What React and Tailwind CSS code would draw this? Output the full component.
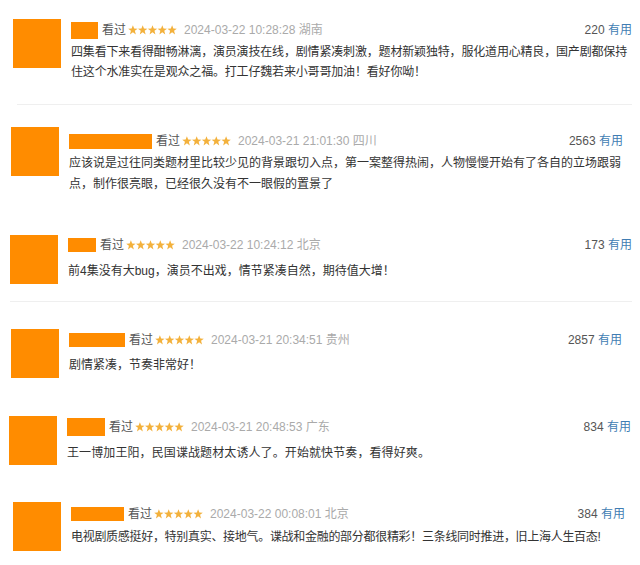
import React from "react";

const reviews = [
  {
    row: "h-[110px] pt-[19px] pl-[13px] pr-[8px]",
    nameBox: "w-[27px] h-[17px]",
    headMt: "mt-[3px]",
    body: "mt-[4px] leading-[20px] tracking-[-0.17px]",
    lines: [
      "四集看下来看得酣畅淋漓，演员演技在线，剧情紧凑刺激，题材新颖独特，服化道用心精良，国产剧都保持",
      "住这个水准实在是观众之福。打工仔魏若来小哥哥加油！看好你呦！",
    ],
    date: "2024-03-22 10:28:28",
    place: "湖南",
    votes: 220,
    divider: "ml-[4px] mb-[5px]",
  },
  {
    row: "h-[105px] pt-[17px] pl-[11px] pr-[17px]",
    nameBox: "w-[83px] h-[15px]",
    headMt: "mt-[6px]",
    body: "mt-[4px] leading-[21px]",
    lines: [
      "应该说是过往同类题材里比较少见的背景跟切入点，第一案整得热闹，人物慢慢开始有了各自的立场跟弱",
      "点，制作很亮眼，已经很久没有不一眼假的置景了",
    ],
    date: "2024-03-21 21:01:30",
    place: "四川",
    votes: 2563,
  },
  {
    row: "h-[95px] pt-[20px] pl-[10px] pr-[8px]",
    nameBox: "w-[28px] h-[14px]",
    headMt: "mt-[2px]",
    body: "mt-[8px] leading-[20px]",
    lines: ["前4集没有大bug，演员不出戏，情节紧凑自然，期待值大增！"],
    date: "2024-03-22 10:24:12",
    place: "北京",
    votes: 173,
    divider: "ml-0 mb-[8px]",
  },
  {
    row: "h-[85px] pt-[19px] pl-[11px] pr-[18px]",
    nameBox: "w-[56px] h-[14px]",
    headMt: "mt-[3px]",
    body: "mt-[7px] leading-[20px]",
    lines: ["剧情紧凑，节奏非常好！"],
    date: "2024-03-21 20:34:51",
    place: "贵州",
    votes: 2857,
  },
  {
    row: "h-[90px] pt-[21px] pl-[9px] pr-[9px]",
    nameBox: "w-[38px] h-[18px]",
    headMt: "mt-[3px]",
    body: "mt-[8px] leading-[20px] tracking-[0.1px]",
    lines: ["王一博加王阳，民国谍战题材太诱人了。开始就快节奏，看得好爽。"],
    date: "2024-03-21 20:48:53",
    place: "广东",
    votes: 834,
  },
  {
    row: "h-[80px] pt-[17px] pl-[13px] pr-[15px]",
    nameBox: "w-[53px] h-[14px]",
    headMt: "mt-[4px]",
    body: "mt-[5px] leading-[20px] tracking-[-0.3px]",
    lines: ["电视剧质感挺好，特别真实、接地气。谍战和金融的部分都很精彩！三条线同时推进，旧上海人生百态!"],
    date: "2024-03-22 00:08:01",
    place: "北京",
    votes: 384,
  },
];

// five small gold stars, drawn as one strip
const Stars = () => (
  <svg width="49" height="10" viewBox="0 0 50 10" className="shrink-0">
    {[0, 1, 2, 3, 4].map((i) => (
      <polygon
        key={i}
        transform={`translate(${i * 10} 0)`}
        points="5,0.2 6.3,3.5 9.8,3.6 7,5.8 8,9.5 5,7.4 2,9.5 3,5.8 0.2,3.6 3.7,3.5"
        fill="#f3b13c"
      />
    ))}
  </svg>
);

const Review = ({ r }) => (
  <div className={`flex flex-col ${r.row}`}>
    <div className="flex items-start">
      <div className="w-[48px] h-[49px] bg-[#ff8c00] shrink-0" />
      <div className="flex-1 ml-[10px] min-w-0">
        <div className={`flex items-center h-[16px] text-[12px] ${r.headMt}`}>
          <div className={`bg-[#ff8c00] shrink-0 ${r.nameBox}`} />
          <span className="ml-[4px] text-[#555]">看过</span>
          <span className="ml-[2px] flex items-center">
            <Stars />
          </span>
          <span className="ml-[7px] text-[#aaa]">
            {r.date} {r.place}
          </span>
          <span className="ml-auto text-[#555]">
            {r.votes} <span className="text-[#3f7db3]">有用</span>
          </span>
        </div>
        <div className={`text-[12px] text-[#333] ${r.body}`}>
          {r.lines.map((l, i) => (
            <div key={i} className="whitespace-nowrap">
              {l}
            </div>
          ))}
        </div>
      </div>
    </div>
    {r.divider && <div className={`mt-auto h-px bg-[#efefef] ${r.divider}`} />}
  </div>
);

export default function App() {
  return (
    <div
      className="w-[640px] h-[565px] bg-white overflow-hidden"
      style={{ fontFamily: "'Liberation Sans', 'Noto Sans CJK SC', sans-serif" }}
    >
      {reviews.map((r, i) => (
        <Review key={i} r={r} />
      ))}
    </div>
  );
}
